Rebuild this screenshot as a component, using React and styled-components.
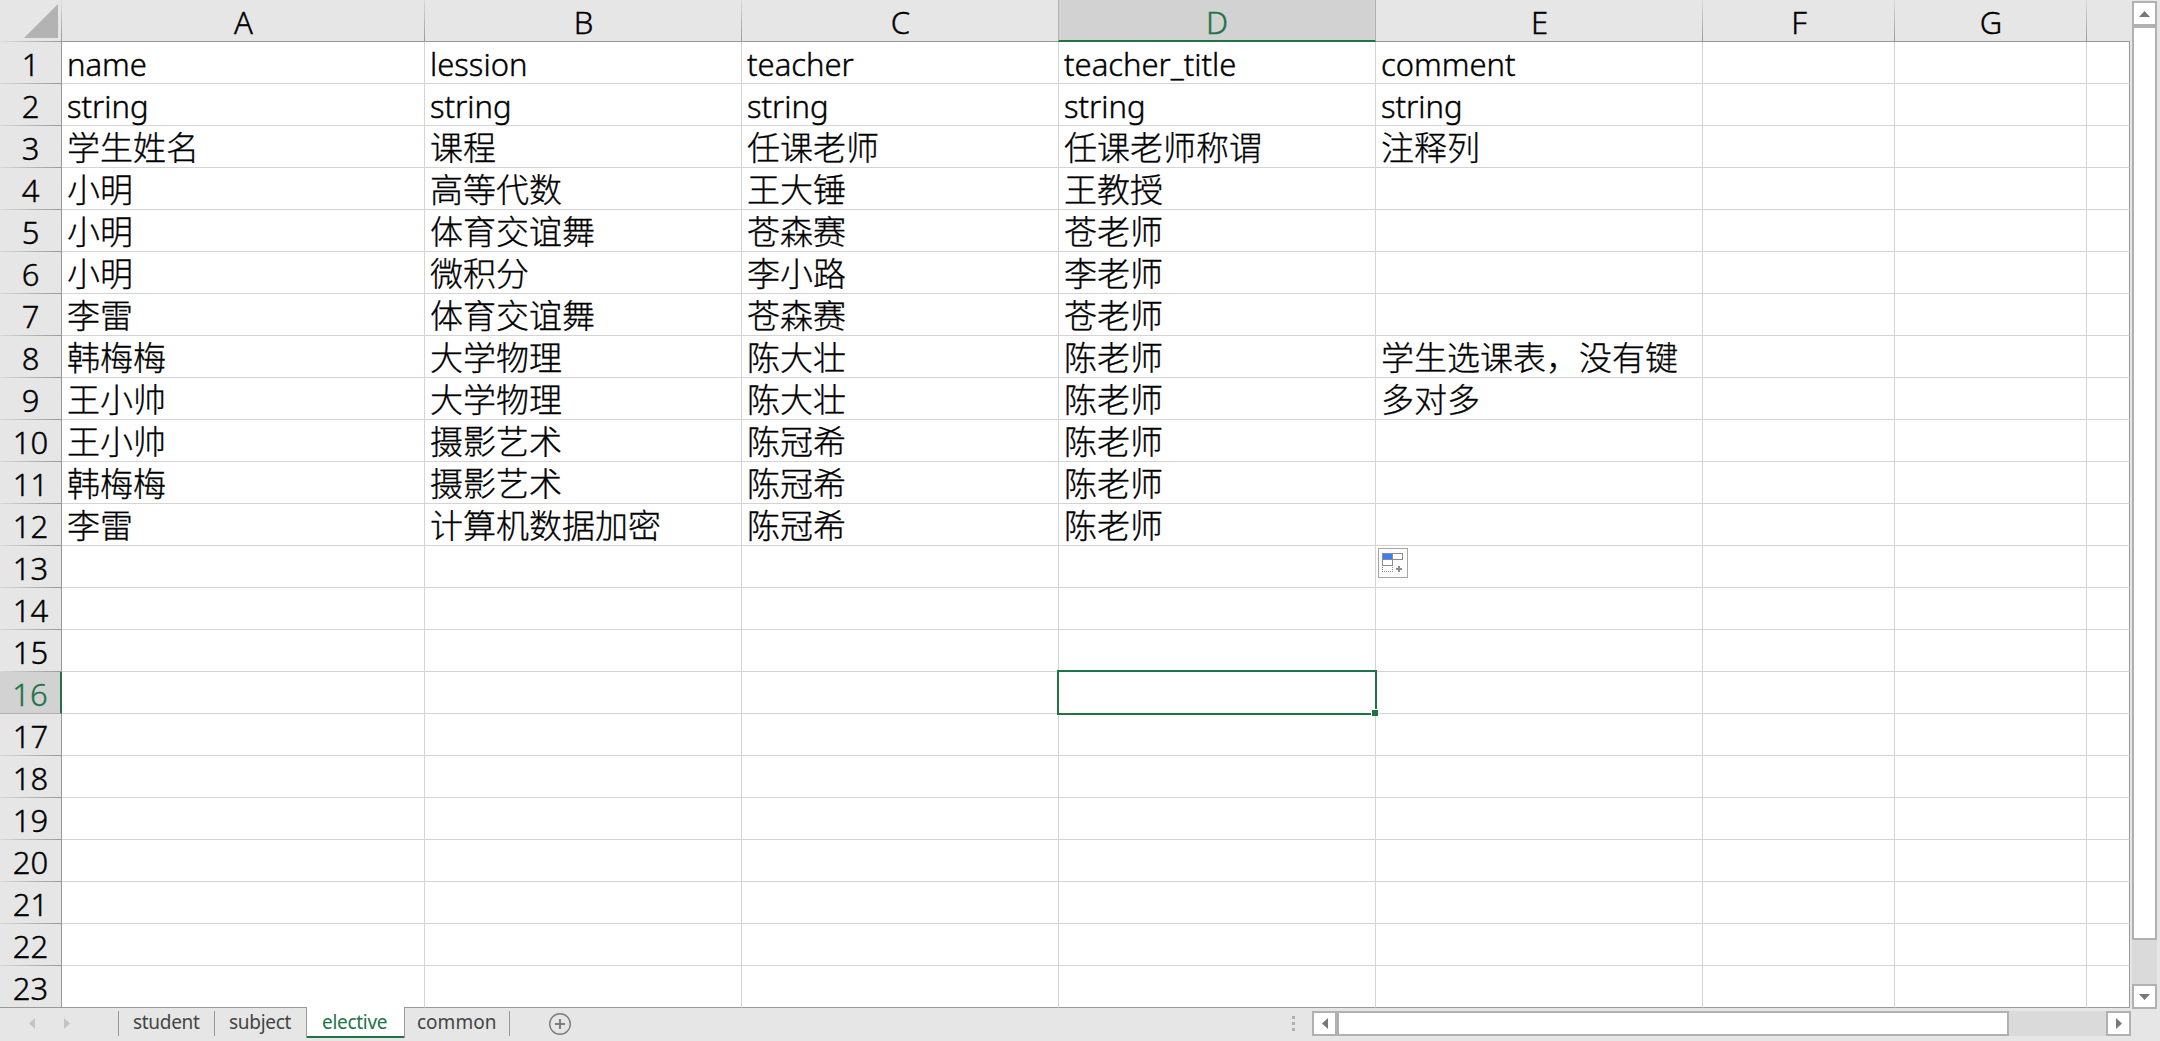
import React from 'react';
import styled, { createGlobalStyle, css } from 'styled-components';

const color = {
  chrome: '#e6e6e6',
  selectedHead: '#d2d2d2',
  grid: '#d4d4d4',
  edge: '#999999',
  green: '#217346',
  control: '#b1b1b1',
  track: '#dadada',
  arrow: '#777777',
};

const COLUMNS = [
  { id: 'A', width: 363 },
  { id: 'B', width: 317 },
  { id: 'C', width: 317 },
  { id: 'D', width: 317 },
  { id: 'E', width: 327 },
  { id: 'F', width: 192 },
  { id: 'G', width: 192 },
  { id: '', width: 43 },
];

const DATA = [
  ['name', 'lession', 'teacher', 'teacher_title', 'comment'],
  ['string', 'string', 'string', 'string', 'string'],
  ['学生姓名', '课程', '任课老师', '任课老师称谓', '注释列'],
  ['小明', '高等代数', '王大锤', '王教授'],
  ['小明', '体育交谊舞', '苍森赛', '苍老师'],
  ['小明', '微积分', '李小路', '李老师'],
  ['李雷', '体育交谊舞', '苍森赛', '苍老师'],
  ['韩梅梅', '大学物理', '陈大壮', '陈老师', '学生选课表，没有键'],
  ['王小帅', '大学物理', '陈大壮', '陈老师', '多对多'],
  ['王小帅', '摄影艺术', '陈冠希', '陈老师'],
  ['韩梅梅', '摄影艺术', '陈冠希', '陈老师'],
  ['李雷', '计算机数据加密', '陈冠希', '陈老师'],
];

const ROW_COUNT = 23;
const SELECTED = { row: 16, col: 'D' };

const GlobalStyle = createGlobalStyle`
  * { box-sizing: border-box; }
  body {
    margin: 0;
    background: ${color.chrome};
    font-family: "Noto Sans", "Noto Sans CJK SC", sans-serif;
    font-weight: 300;
    color: #000;
    overflow: hidden;
  }
  svg { display: block; }
`;

const Window = styled.div`
  width: 2160px;
  height: 1041px;
  display: flex;
  flex-direction: column;
  background: ${color.chrome};
`;

const Main = styled.div`
  display: flex;
  height: 1008px;
`;

const Sheet = styled.div`
  display: flex;
  flex-direction: column;
  width: 2130px;
`;

const gridRow = css`
  display: grid;
  grid-template-columns: 62px ${COLUMNS.map((c) => `${c.width}px`).join(' ')};
`;

const HeaderRow = styled.div`
  ${gridRow}
  height: 42px;
`;

const Row = styled.div`
  ${gridRow}
  height: 42px;
`;

const Corner = styled.div`
  display: flex;
  justify-content: flex-end;
  padding: 4px 4px 0 0;
  background:
    linear-gradient(to right, #dedede, ${color.edge}) bottom / 100% 1px no-repeat,
    linear-gradient(to bottom, #dedede, ${color.edge}) right / 1px 100% no-repeat;
`;

const glyphs = css`
  font-size: 31px;
  line-height: 44px;
  white-space: nowrap;
  -webkit-text-stroke: 0.4px currentColor;
`;

const ColumnHead = styled.div`
  ${glyphs}
  text-align: center;
  height: 42px;
  overflow: hidden;
  background:
    linear-gradient(${color.edge}, ${color.edge}) bottom / 100% 1px no-repeat,
    linear-gradient(to bottom, #d8d8d8, ${color.edge}) right / 1px 100% no-repeat;
  ${(p) => p.$last && css`
    background: linear-gradient(${color.edge}, ${color.edge}) bottom / 100% 1px no-repeat;
  `}
  ${(p) => p.$selected && css`
    color: ${color.green};
    background: ${color.selectedHead};
    border-right: 1px solid #b0b0b0;
    border-bottom: 2px solid ${color.green};
    margin-left: -1px;
    border-left: 1px solid #b0b0b0;
  `}
`;

const RowHead = styled.div`
  ${glyphs}
  text-align: center;
  height: 42px;
  overflow: hidden;
  border-right: 1px solid ${color.edge};
  background: linear-gradient(to right, #d8d8d8, ${color.edge}) bottom / 100% 1px no-repeat;
  ${(p) => p.$last && css`
    background: linear-gradient(${color.edge}, ${color.edge}) bottom / 100% 1px no-repeat;
  `}
  ${(p) => p.$selected && css`
    color: ${color.green};
    background: ${color.selectedHead};
    border-right: 2px solid ${color.green};
    border-bottom: 1px solid #b0b0b0;
  `}
`;

const Cell = styled.div`
  ${glyphs}
  position: relative;
  height: 42px;
  padding-left: 5px;
  background: #fff;
  border-right: 1px solid ${(p) => (p.$lastCol ? color.edge : color.grid)};
  border-bottom: 1px solid ${(p) => (p.$lastRow ? color.edge : color.grid)};
  ${(p) => p.$cjk && css`
    font-size: 33px;
    line-height: 44px;
    -webkit-text-stroke-width: 0.3px;
  `}
`;

const Selection = styled.div`
  position: absolute;
  z-index: 2;
  top: -2px;
  left: -2px;
  width: 320px;
  height: 45px;
  border: 2px solid ${color.green};
`;

const FillHandle = styled.div`
  position: absolute;
  right: -3px;
  bottom: -3px;
  width: 7px;
  height: 7px;
  background: ${color.green};
  border: 0 solid #fff;
  border-width: 1px 0 0 1px;
`;

const FillOptions = styled.div`
  position: absolute;
  z-index: 2;
  top: 2px;
  left: 2px;
  width: 30px;
  height: 30px;
  background: #fdfdfd;
  border: 1px solid #a6a6a6;
`;

const VScroll = styled.div`
  display: flex;
  flex-direction: column;
  width: 25px;
  height: 1008px;
  margin: 1px 0 0 2px;
`;

const HScroll = styled.div`
  display: flex;
  width: 819px;
  height: 25px;
  margin-top: 3px;
`;

const ArrowButton = styled.div`
  display: flex;
  flex: none;
  width: 25px;
  height: 25px;
  background: #fff;
  border: 2px solid ${color.control};
  align-items: center;
  justify-content: center;
`;

const Thumb = styled.div`
  flex: none;
  background: #fff;
  border: 2px solid ${color.control};
  ${(p) => (p.$vertical ? 'height: 914px;' : 'width: 672px;')}
`;

const Track = styled.div`
  flex: 1;
  background: ${color.track};
`;

const Footer = styled.div`
  display: flex;
  height: 33px;
`;

const NavArrows = styled.div`
  display: flex;
  width: 118px;
  padding: 10px 0 0 29px;
  gap: 29px;
`;

const Tab = styled.div`
  height: 25px;
  margin-top: 3px;
  width: ${(p) => p.$width}px;
  padding-left: ${(p) => p.$inset}px;
  font-size: 19px;
  font-weight: 400;
  letter-spacing: ${(p) => p.$tracking ?? -0.3}px;
  line-height: 23px;
  color: #444;
  border-left: ${(p) => (p.$divided ? `1px solid ${color.edge}` : '0')};
  ${(p) => p.$active && css`
    position: relative;
    z-index: 3;
    height: 31px;
    margin-top: -1px;
    line-height: 31px;
    color: ${color.green};
    background: #fff;
    border: 0 solid ${color.edge};
    border-width: 0 1px;
    box-shadow: inset 0 -2px ${color.green};
  `}
`;

const TabEnd = styled.div`
  width: 1px;
  height: 25px;
  margin-top: 3px;
  background: ${color.edge};
`;

const AddSheet = styled.div`
  margin: 5px 0 0 38px;
`;

const Grip = styled.div`
  display: grid;
  gap: 3px;
  align-content: start;
  margin: 8px 17px 0 auto;
`;

const Dot = styled.i`
  width: 3px;
  height: 3px;
  background: ${color.control};
`;

const Spacer = styled.div`
  width: 29px;
`;

const ARROWS = {
  up: { w: 11, h: 6, d: 'M0 6L5.5 0L11 6Z' },
  down: { w: 11, h: 6, d: 'M0 0H11L5.5 6Z' },
  left: { w: 6, h: 11, d: 'M6 0V11L0 5.5Z' },
  right: { w: 6, h: 11, d: 'M0 0V11L6 5.5Z' },
};

function Arrow({ dir, fill = color.arrow }) {
  const a = ARROWS[dir];
  return (
    <svg width={a.w} height={a.h}>
      <path d={a.d} fill={fill} />
    </svg>
  );
}

function FillIcon() {
  return (
    <svg width="28" height="28" fill="none" stroke="#8c8c8c" shapeRendering="crispEdges">
      <rect x="3.5" y="4.5" width="10" height="6" fill="#3b7dfc" />
      <rect x="13.5" y="4.5" width="10" height="6" fill="#fff" />
      <rect x="3.5" y="10.5" width="10" height="6" fill="#fff" />
      <path d="M3.5 18V23M13.5 18V23M3 22.5H14" strokeDasharray="1 1" />
      <path d="M17 20H23M20 17V23" strokeWidth="2" />
    </svg>
  );
}

const hasCjk = (text) => /[\u4e00-\u9fff]/.test(text);

export default function App() {
  const rows = Array.from({ length: ROW_COUNT }, (_, i) => i + 1);
  return (
    <Window>
      <GlobalStyle />
      <Main>
        <Sheet>
          <HeaderRow>
            <Corner>
              <svg width="34" height="34">
                <path d="M34 0V34H0Z" fill="#b3b3b3" />
              </svg>
            </Corner>
            {COLUMNS.map((c) => (
              <ColumnHead key={c.id} $selected={c.id === SELECTED.col} $last={!c.id}>
                {c.id}
              </ColumnHead>
            ))}
          </HeaderRow>
          {rows.map((n) => (
            <Row key={n}>
              <RowHead $selected={n === SELECTED.row} $last={n === ROW_COUNT}>{n}</RowHead>
              {COLUMNS.map((c, i) => {
                const text = DATA[n - 1]?.[i] ?? '';
                return (
                  <Cell key={c.id} $cjk={hasCjk(text)} $lastCol={!c.id} $lastRow={n === ROW_COUNT}>
                    {text}
                    {n === SELECTED.row && c.id === SELECTED.col && (
                      <Selection>
                        <FillHandle />
                      </Selection>
                    )}
                    {n === 13 && c.id === 'E' && (
                      <FillOptions>
                        <FillIcon />
                      </FillOptions>
                    )}
                  </Cell>
                );
              })}
            </Row>
          ))}
        </Sheet>
        <VScroll>
          <ArrowButton><Arrow dir="up" /></ArrowButton>
          <Thumb $vertical />
          <Track />
          <ArrowButton><Arrow dir="down" /></ArrowButton>
        </VScroll>
      </Main>
      <Footer>
        <NavArrows>
          <Arrow dir="left" fill="#c3c3c3" />
          <Arrow dir="right" fill="#c3c3c3" />
        </NavArrows>
        <Tab $width={96} $inset={14} $divided>student</Tab>
        <Tab $width={92} $inset={14} $divided>subject</Tab>
        <Tab $width={99} $inset={15} $active>elective</Tab>
        <Tab $width={104} $inset={12} $tracking={0}>common</Tab>
        <TabEnd />
        <AddSheet>
          <svg width="24" height="24" fill="none" stroke="#7d7d7d">
            <circle cx="12" cy="11" r="10.3" strokeWidth="1.4" />
            <path d="M7 11H17M12 6V16" strokeWidth="2" />
          </svg>
        </AddSheet>
        <Grip>
          <Dot />
          <Dot />
          <Dot />
        </Grip>
        <HScroll>
          <ArrowButton><Arrow dir="left" /></ArrowButton>
          <Thumb />
          <Track />
          <ArrowButton><Arrow dir="right" /></ArrowButton>
        </HScroll>
        <Spacer />
      </Footer>
    </Window>
  );
}
